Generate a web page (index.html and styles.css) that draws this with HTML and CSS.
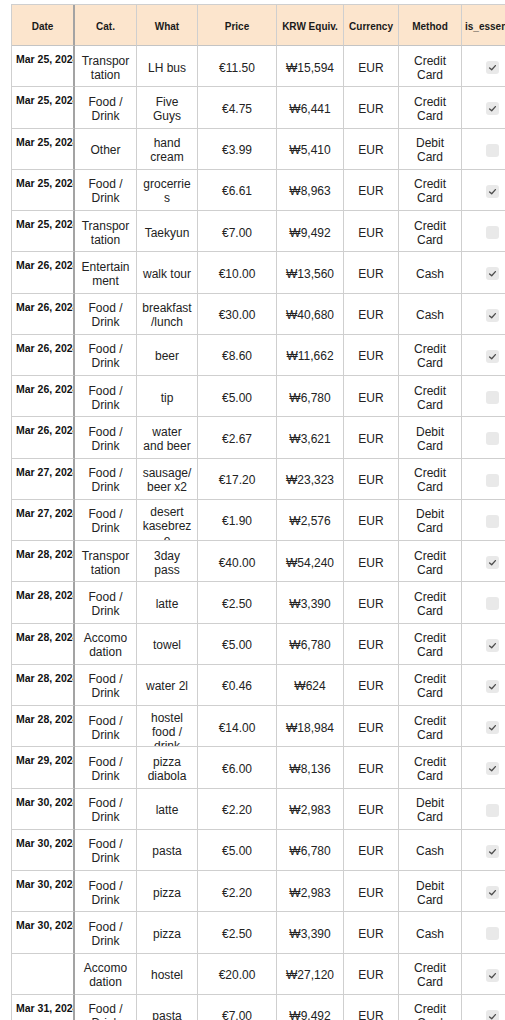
FILE: index.html
```html
<!DOCTYPE html>
<html lang="en">
<head>
<meta charset="utf-8">
<title>Expenses</title>
<link rel="stylesheet" href="styles.css">
</head>
<body>
<div class="sheet">
  <div class="row head">
    <div class="c date">Date</div>
    <div class="c cat">Cat.</div>
    <div class="c what">What</div>
    <div class="c">Price</div>
    <div class="c">KRW Equiv.</div>
    <div class="c">Currency</div>
    <div class="c">Method</div>
    <div class="c ess">is_essential</div>
  </div>
  <div id="rows"></div>
</div>
<script src="app.js"></script>
</body>
</html>
```
FILE: app.js
```js
const data = [
  ["Mar 25, 2024","Transportation","LH bus","€11.50","₩15,594","Credit Card",1],
  ["Mar 25, 2024","Food / Drink","Five Guys","€4.75","₩6,441","Credit Card",1],
  ["Mar 25, 2024","Other","hand cream","€3.99","₩5,410","Debit Card",0],
  ["Mar 25, 2024","Food / Drink","grocerries","€6.61","₩8,963","Credit Card",1],
  ["Mar 25, 2024","Transportation","Taekyun","€7.00","₩9,492","Credit Card",0],
  ["Mar 26, 2024","Entertainment","walk tour","€10.00","₩13,560","Cash",1],
  ["Mar 26, 2024","Food / Drink","breakfast/lunch","€30.00","₩40,680","Cash",1],
  ["Mar 26, 2024","Food / Drink","beer","€8.60","₩11,662","Credit Card",1],
  ["Mar 26, 2024","Food / Drink","tip","€5.00","₩6,780","Credit Card",0],
  ["Mar 26, 2024","Food / Drink","water and beer","€2.67","₩3,621","Debit Card",0],
  ["Mar 27, 2024","Food / Drink","sausage/ beer x2","€17.20","₩23,323","Credit Card",0],
  ["Mar 27, 2024","Food / Drink","desert kasebreze","€1.90","₩2,576","Debit Card",0],
  ["Mar 28, 2024","Transportation","3day pass","€40.00","₩54,240","Credit Card",1],
  ["Mar 28, 2024","Food / Drink","latte","€2.50","₩3,390","Credit Card",0],
  ["Mar 28, 2024","Accomodation","towel","€5.00","₩6,780","Credit Card",1],
  ["Mar 28, 2024","Food / Drink","water 2l","€0.46","₩624","Credit Card",1],
  ["Mar 28, 2024","Food / Drink","hostel food / drink","€14.00","₩18,984","Credit Card",1],
  ["Mar 29, 2024","Food / Drink","pizza diabola","€6.00","₩8,136","Credit Card",1],
  ["Mar 30, 2024","Food / Drink","latte","€2.20","₩2,983","Debit Card",0],
  ["Mar 30, 2024","Food / Drink","pasta","€5.00","₩6,780","Cash",1],
  ["Mar 30, 2024","Food / Drink","pizza","€2.20","₩2,983","Debit Card",1],
  ["Mar 30, 2024","Food / Drink","pizza","€2.50","₩3,390","Cash",0],
  ["","Accomodation","hostel","€20.00","₩27,120","Credit Card",1],
  ["Mar 31, 2024","Food / Drink","pasta","€7.00","₩9,492","Credit Card",1]
];
const check = '<svg viewBox="0 0 13 13" width="13" height="13"><path d="M3.6 6.9 L5.7 8.8 L9.4 4.6" fill="none" stroke="#4d4d4d" stroke-width="1.3" stroke-linecap="round" stroke-linejoin="round"/></svg>';
const host = document.getElementById("rows");
host.innerHTML = data.map(r =>
  '<div class="row">' +
  '<div class="c date">' + r[0] + '</div>' +
  '<div class="c cat">' + r[1] + '</div>' +
  '<div class="c what">' + r[2] + '</div>' +
  '<div class="c">' + r[3] + '</div>' +
  '<div class="c">' + r[4] + '</div>' +
  '<div class="c">EUR</div>' +
  '<div class="c">' + r[5] + '</div>' +
  '<div class="c ess"><span class="box' + (r[6] ? ' on' : '') + '">' + (r[6] ? check : '') + '</span></div>' +
  '</div>'
).join("");
```
FILE: styles.css
```css
html, body {
  margin: 0;
  padding: 0;
  overflow: hidden;
  background: #ffffff;
}
body {
  width: 505px;
  height: 1020px;
  font-family: "Liberation Sans", Arial, sans-serif;
  color: #222222;
}
.sheet {
  margin: 4px 0 0 11px;
  width: 515px;
  border-top: 1px solid #cfcfcf;
  border-left: 1px solid #cfcfcf;
}
.row {
  display: grid;
  grid-template-columns: 63px 62px 61px 79px 67px 55px 63px 63px;
  height: 41.26px;
}
.row.head {
  height: 41px;
  background: #fce5cd;
}
.c {
  box-sizing: border-box;
  border-right: 1px solid #cfcfcf;
  border-bottom: 1px solid #cfcfcf;
  overflow: hidden;
  display: flex;
  align-items: safe center;
  justify-content: center;
  text-align: center;
  padding: 5px 5px 2px;
  font-size: 12px;
  line-height: 14px;
  overflow-wrap: anywhere;
  min-width: 0;
}
.c.cat {
  padding: 5px 6px 2px;
}
.c.date {
  display: block;
  border-right: 2px solid #a3a3a3;
  padding: 6px 0 0 4px;
  font-size: 10.5px;
  font-weight: bold;
  color: #111111;
  white-space: nowrap;
  text-align: left;
}
.head .c {
  font-size: 10px;
  font-weight: bold;
  color: #1a1a1a;
  white-space: nowrap;
  border-bottom-color: #c4c4c4;
  padding-top: 4px;
  padding-bottom: 0;
}
.head .c.date {
  display: flex;
  padding: 4px 0 0;
  text-align: center;
}
.head .c.ess {
  justify-content: flex-start;
  padding-left: 3px;
}
.box {
  width: 13px;
  height: 13px;
  border-radius: 3px;
  background: #e9e9e9;
  display: block;
  margin-left: -1px;
}
.box svg {
  display: block;
}
```
